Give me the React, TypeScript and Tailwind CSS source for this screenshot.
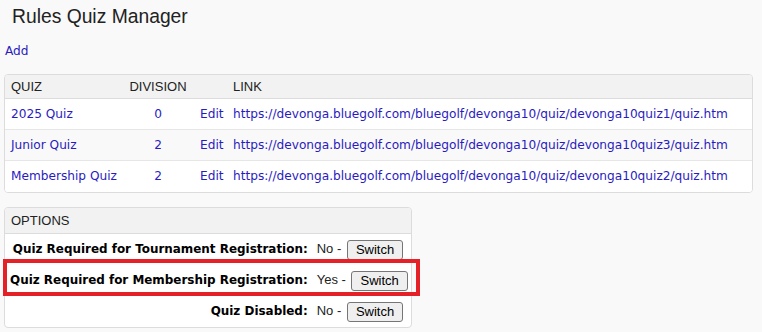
import React from "react";

const LINK = "text-[#2a1bbf]";
const DV = "font-['DejaVu_Sans',Verdana,sans-serif]";
const TAHOMA = `${DV} text-[12.15px]`;
const ARIAL = "font-['Liberation_Sans',Arial,sans-serif]";

const quizzes = [
  { name: "2025 Quiz", div: "0", url: "https://devonga.bluegolf.com/bluegolf/devonga10/quiz/devonga10quiz1/quiz.htm", bg: "bg-white" },
  { name: "Junior Quiz", div: "2", url: "https://devonga.bluegolf.com/bluegolf/devonga10/quiz/devonga10quiz3/quiz.htm", bg: "bg-[#f9f9f9]" },
  { name: "Membership Quiz", div: "2", url: "https://devonga.bluegolf.com/bluegolf/devonga10/quiz/devonga10quiz2/quiz.htm", bg: "bg-white" },
];

const options = [
  { label: "Quiz Required for Tournament Registration:", value: "No" },
  { label: "Quiz Required for Membership Registration:", value: "Yes" },
  { label: "Quiz Disabled:", value: "No" },
];

function SwitchButton() {
  return (
    <button className={`${ARIAL} ml-[2px] h-[20px] rounded-[3px] border border-[#767676] bg-[#efefef] px-[8px] text-[13px] leading-[16px] text-black align-middle`}>
      Switch
    </button>
  );
}

export default function App() {
  return (
    <div className="min-h-screen w-full bg-[#f9f9f9] pl-[4px] pt-[6px] pb-[4px]">
      <h1 className={`${ARIAL} pl-[8px] text-[19.3px] leading-[22px] text-[#222]`}>Rules Quiz Manager</h1>
      <div className={`${TAHOMA} ${LINK} mt-[16px] pl-[1px] leading-[15px]`}>Add</div>

      <div className="mt-[15px] w-[749px] overflow-hidden rounded-[4px] border border-[#dcdcdc] bg-white">
        <div className={`${ARIAL} grid h-[24px] grid-cols-[118px_70px_34px_1fr] items-center border-b border-[#dcdcdc] bg-[#f2f2f2] text-[13px] text-[#222]`}>
          <div className="pl-[6px]">QUIZ</div>
          <div className="text-center">DIVISION</div>
          <div></div>
          <div className="pl-[6px]">LINK</div>
        </div>
        {quizzes.map((q, i) => (
          <div
            key={q.name}
            className={`${TAHOMA} ${LINK} ${q.bg} grid h-[31px] grid-cols-[118px_70px_34px_1fr] items-center ${i < quizzes.length - 1 ? "border-b border-[#e6e6e6]" : ""}`}
          >
            <div className="pl-[6px] whitespace-nowrap">{q.name}</div>
            <div className="text-center">{q.div}</div>
            <div className="pl-[7px]">Edit</div>
            <div className="pl-[6px] whitespace-nowrap">{q.url}</div>
          </div>
        ))}
      </div>

      <div className="relative mt-[14px] w-fit">
        <div className="overflow-hidden rounded-[4px] border border-[#dcdcdc] bg-white">
          <div className={`${ARIAL} flex h-[26px] items-center border-b border-[#dcdcdc] bg-[#f2f2f2] pl-[6px] text-[13px] text-[#222]`}>
            OPTIONS
          </div>
          <table className="border-collapse">
            <tbody>
              {options.map((o) => (
                <tr key={o.label} className="h-[31px]">
                  <td className={`${DV} text-[11.95px] whitespace-nowrap pl-[5px] pr-[5px] text-right font-bold text-black`}>
                    {o.label}
                  </td>
                  <td className={`${ARIAL} whitespace-nowrap pl-[4px] pr-[3px] text-[13px] text-[#222]`}>
                    {o.value} -{" "}
                    <SwitchButton />
                  </td>
                </tr>
              ))}
            </tbody>
          </table>
        </div>
        <div className="pointer-events-none absolute left-[-1px] top-[52px] h-[37px] w-[417px] border-4 border-[#e42126]"></div>
      </div>
    </div>
  );
}
